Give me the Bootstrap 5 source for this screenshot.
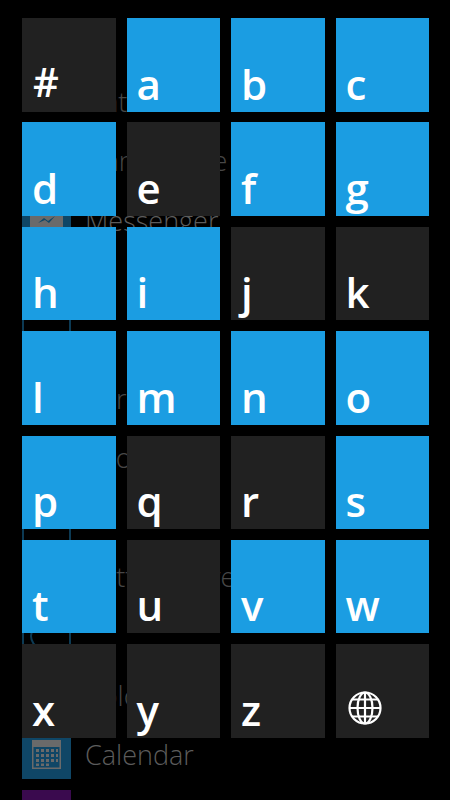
<!DOCTYPE html>
<html lang="en">
<head>
<meta charset="utf-8">
<title>Jump list</title>
<link href="https://cdn.jsdelivr.net/npm/bootstrap@5.3.0/dist/css/bootstrap.min.css" rel="stylesheet">
<style>
html, body { background: #000; height: 800px; overflow: hidden; }
.stage { height: 800px; overflow: hidden; }
.app-list { padding: 17.6px 0 0 22px; margin: 0; }
.app-row { height: 49px; margin-bottom: 10.4px; }
.app-ico { width: 49px; height: 49px; flex: none; }
.ico-solid { background: #0f4666; }
.ico-line { border: 2px solid #0c3a54; }
.ico-purple { background: #3a0a4e; }
.app-name { margin-left: 14px; font: 300 27px/1 "Open Sans", "Noto Sans", sans-serif; color: #5c5c5c; white-space: nowrap; }
.app-dim { color: #474747; }
.tile-grid { top: 18px; left: 22px; display: grid; grid-template-columns: repeat(4, 93.5px); grid-auto-rows: 93.5px; gap: 10.9px 11px; }
.tile { padding: 0 0 0 10px; font: 600 42px/1 "Open Sans", "Noto Sans", sans-serif; color: #fff; }
.tile > span { display: block; margin-bottom: 7px; }
.tile > span.glyph-hash { margin-bottom: 10px; margin-left: 1px; font-size: 40px; }
.tile-on { background: #1b9de2; }
.tile-off { background: #212121; }
.globe { width: 34px; height: 34px; margin: 0 0 13px 2px; }
</style>
</head>
<body>
<div class="stage position-relative">
  <ul class="app-list list-unstyled">
    <li class="app-row d-flex align-items-center"><div class="app-ico"></div></li>
    <li class="app-row d-flex align-items-center"><div class="app-ico"></div><span class="app-name app-dim">Data</span></li>
    <li class="app-row d-flex align-items-center"><div class="app-ico"></div><span class="app-name app-dim">Game store</span></li>
    <li class="app-row d-flex align-items-center"><div class="app-ico ico-solid d-flex align-items-center justify-content-center">
      <svg width="33" height="33" viewBox="0 0 33 33"><rect x="0" y="2" width="33" height="29" rx="8" fill="#6a6a6a"/><path d="M8 19l6-5 4 3 7-5-6 7-4-3z" fill="#0f4666"/></svg>
    </div><span class="app-name">Messenger</span></li>
    <li class="app-row d-flex align-items-center"><div class="app-ico"></div></li>
    <li class="app-row d-flex align-items-center"><div class="app-ico ico-line"></div></li>
    <li class="app-row d-flex align-items-center"><div class="app-ico"></div><span class="app-name app-dim">Cards</span></li>
    <li class="app-row d-flex align-items-center"><div class="app-ico"></div><span class="app-name app-dim">Shopping</span></li>
    <li class="app-row d-flex align-items-center"><div class="app-ico ico-line"></div></li>
    <li class="app-row d-flex align-items-center"><div class="app-ico"></div><span class="app-name app-dim">Battery Saver</span></li>
    <li class="app-row d-flex align-items-center"><div class="app-ico ico-line d-flex align-items-center justify-content-start">
      <svg width="20" height="30" viewBox="0 0 20 30"><path d="M16 2C9 6 7 11 7 15s2 9 9 13" fill="none" stroke="#0c3a54" stroke-width="2"/></svg>
    </div></li>
    <li class="app-row d-flex align-items-center"><div class="app-ico"></div><span class="app-name app-dim">Colors</span></li>
    <li class="app-row d-flex align-items-center"><div class="app-ico ico-solid d-flex align-items-center justify-content-center">
      <svg width="29" height="29" viewBox="0 0 29 29"><rect width="29" height="29" fill="#6a6a6a"/><rect x="1.500" y="7" width="26" height="20.500" fill="#0f4666"/><g fill="#6a6a6a"><rect x="4" y="9" width="3" height="3"/><rect x="9" y="9" width="3" height="3"/><rect x="14" y="9" width="3" height="3"/><rect x="19" y="9" width="3" height="3"/><rect x="24" y="9" width="2" height="3"/><rect x="4" y="14" width="3" height="3"/><rect x="9" y="14" width="3" height="3"/><rect x="14" y="14" width="3" height="3"/><rect x="19" y="14" width="3" height="3"/><rect x="24" y="14" width="2" height="3"/><rect x="4" y="19" width="3" height="3"/><rect x="9" y="19" width="3" height="3"/><rect x="14" y="19" width="3" height="3"/><rect x="19" y="19" width="3" height="3"/><rect x="24" y="19" width="2" height="3"/><rect x="4" y="23.500" width="3" height="2.500"/><rect x="9" y="23.500" width="3" height="2.500"/><rect x="14" y="23.500" width="3" height="2.500"/></g></svg>
    </div><span class="app-name">Calendar</span></li>
    <li class="app-row d-flex align-items-center"><div class="app-ico ico-purple"></div></li>
  </ul>

  <div class="tile-grid position-absolute">
    <div class="tile tile-off d-flex align-items-end"><span class="glyph-hash">#</span></div>
    <div class="tile tile-on d-flex align-items-end"><span>a</span></div>
    <div class="tile tile-on d-flex align-items-end"><span>b</span></div>
    <div class="tile tile-on d-flex align-items-end"><span>c</span></div>
    <div class="tile tile-on d-flex align-items-end"><span>d</span></div>
    <div class="tile tile-off d-flex align-items-end"><span>e</span></div>
    <div class="tile tile-on d-flex align-items-end"><span>f</span></div>
    <div class="tile tile-on d-flex align-items-end"><span>g</span></div>
    <div class="tile tile-on d-flex align-items-end"><span>h</span></div>
    <div class="tile tile-on d-flex align-items-end"><span>i</span></div>
    <div class="tile tile-off d-flex align-items-end"><span>j</span></div>
    <div class="tile tile-off d-flex align-items-end"><span>k</span></div>
    <div class="tile tile-on d-flex align-items-end"><span>l</span></div>
    <div class="tile tile-on d-flex align-items-end"><span>m</span></div>
    <div class="tile tile-on d-flex align-items-end"><span>n</span></div>
    <div class="tile tile-on d-flex align-items-end"><span>o</span></div>
    <div class="tile tile-on d-flex align-items-end"><span>p</span></div>
    <div class="tile tile-off d-flex align-items-end"><span>q</span></div>
    <div class="tile tile-off d-flex align-items-end"><span>r</span></div>
    <div class="tile tile-on d-flex align-items-end"><span>s</span></div>
    <div class="tile tile-on d-flex align-items-end"><span>t</span></div>
    <div class="tile tile-off d-flex align-items-end"><span>u</span></div>
    <div class="tile tile-on d-flex align-items-end"><span>v</span></div>
    <div class="tile tile-on d-flex align-items-end"><span>w</span></div>
    <div class="tile tile-off d-flex align-items-end"><span>x</span></div>
    <div class="tile tile-off d-flex align-items-end"><span>y</span></div>
    <div class="tile tile-off d-flex align-items-end"><span>z</span></div>
    <div class="tile tile-off d-flex align-items-end">
      <svg class="globe" viewBox="0 0 34 34" fill="none" stroke="#fff" stroke-width="2.200"><circle cx="17" cy="17" r="15.500"/><ellipse cx="17" cy="17" rx="7.500" ry="15.500"/><path d="M17 1.500v31M1.500 17h31M4 8.500h26M4 25.500h26"/></svg>
    </div>
  </div>
</div>
<script src="https://cdn.jsdelivr.net/npm/bootstrap@5.3.0/dist/js/bootstrap.bundle.min.js"></script>
</body>
</html>
